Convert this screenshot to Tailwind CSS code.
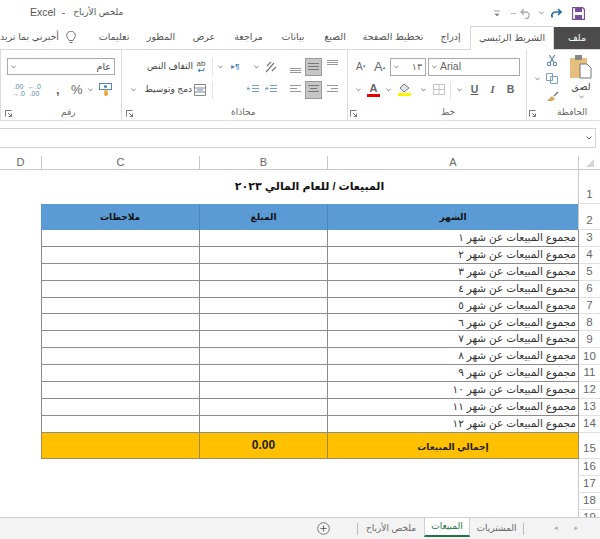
<!DOCTYPE html>
<html lang="ar">
<head>
  <meta charset="UTF-8" />
  <title>ملخص الأرباح - Excel</title>
  <script src="https://cdn.jsdelivr.net/npm/@tailwindcss/browser@4"></script>
</head>
<body class="bg-white text-[#444] overflow-hidden font-['Liberation_Sans','DejaVu_Sans',sans-serif]">
  <svg class="hidden">
    <symbol id="chev" viewBox="0 0 6 4"><path d="M.5.5 3 3 5.5.5" fill="none" stroke="#666" stroke-width="1"/></symbol>
    <symbol id="launch" viewBox="0 0 7 7"><path d="M.5 6.500V.5h6M3 3l3.500 3.500M6.500 3.500v3h-3" fill="none" stroke="#777" stroke-width="1"/></symbol>
  </svg>

  <div class="w-[600px] h-[539px] flex flex-col overflow-hidden">
    <!-- title bar -->
    <div class="h-[26px] flex items-center">
      <span class="ml-[30px] text-[10.5px] text-[#555]">Excel</span>
      <span class="ml-[6px] text-[10.5px] text-[#555]">-</span>
      <span dir="rtl" class="ml-[8px] text-[9px] text-[#555] whitespace-nowrap">ملخص الأرباح</span>
      <div class="ml-auto mr-[15px] flex items-center">
        <svg class="w-[6px] h-[7px]" viewBox="0 0 6 7"><path d="M0 1h6M1 4h4l-2 2z" stroke="#888" fill="#888" stroke-width=".8"/></svg>
        <span class="ml-[11px] w-[5px] h-px bg-[#bbb]"></span>
        <svg class="ml-[4px] w-[12px] h-[11px]" viewBox="0 0 12 11"><path d="M4 1 1 4l3 3M1 4h6a3.500 3.500 0 0 1 0 6.500H5" fill="none" stroke="#a9a9a9" stroke-width="1.300"/></svg>
        <svg class="ml-[7px] w-[5px] h-[4px]"><use href="#chev"/></svg>
        <svg class="ml-[6px] w-[12px] h-[11px]" viewBox="0 0 12 11"><path d="M8 1l3 3-3 3M11 4H5.500a3.500 3.500 0 0 0-3 5.500" fill="none" stroke="#2b6ca8" stroke-width="1.700"/></svg>
        <svg class="ml-[10px] w-[13px] h-[13px]" viewBox="0 0 13 13"><path d="M.5.5h10l2 2v10H.5z" fill="#fff" stroke="#7a4f9a" stroke-width="1.300"/><rect x="3" y="1" width="7" height="4" fill="#7a4f9a"/><rect x="3" y="8" width="7" height="4" fill="#7a4f9a"/></svg>
      </div>
    </div>

    <!-- ribbon tabs -->
    <div class="h-[24px] flex items-stretch border-b border-[#d8d8d8] text-[9.500px] text-[#555] whitespace-nowrap" dir="ltr">
      <span class="w-[58px] flex items-center justify-end" dir="rtl">أخبرني بما تريد</span>
      <span class="w-[26px] flex items-center justify-center">
        <svg class="w-[10px] h-[13px]" viewBox="0 0 10 13"><path d="M3 9.500C2.500 7.500.7 7 .7 4.500a4.300 4.300 0 0 1 8.600 0C9.300 7 7.500 7.500 7 9.500zM3.500 11.500h3" fill="none" stroke="#666" stroke-width=".9"/></svg>
      </span>
      <span class="ml-[15px] w-[30px] flex items-center justify-center">تعليمات</span>
      <span class="ml-[20px] w-[24px] flex items-center justify-center">المطور</span>
      <span class="ml-[21px] w-[20px] flex items-center justify-center">عرض</span>
      <span class="ml-[21px] w-[27px] flex items-center justify-center">مراجعة</span>
      <span class="ml-[21px] w-[20px] flex items-center justify-center">بيانات</span>
      <span class="ml-[22px] w-[20px] flex items-center justify-center">الصيغ</span>
      <span class="ml-[20px] w-[56px] flex items-center justify-center">تخطيط الصفحة</span>
      <span class="ml-[20px] w-[19px] flex items-center justify-center">إدراج</span>
      <span class="ml-[10px] w-[84px] h-[24px] -mb-px bg-white border border-b-0 border-[#d8d8d8] flex items-center justify-center">الشريط الرئيسي</span>
      <span class="w-[46px] h-[22px] mt-[1px] bg-[#4b4b4b] text-white flex items-center justify-center">ملف</span>
    </div>

    <!-- ribbon groups -->
    <div class="h-[71px] flex border-b border-[#dcdcdc] shrink-0">
      <!-- number -->
      <div class="w-[122px] border-l border-r border-[#dcdcdc] flex flex-col">
        <div class="h-[28px] pt-[6px] flex items-center">
          <div class="ml-[6px] w-[108px] h-[17px] border border-[#aaa] flex items-center justify-between px-[3px] text-[9.500px]">
            <svg class="w-[5px] h-[4px]"><use href="#chev"/></svg><span>عام</span>
          </div>
        </div>
        <div class="h-[25px] flex items-center text-[#666]">
          <span class="ml-[11px] w-[13px] text-[7px] leading-[7px] text-center text-[#5a86b0]">.00<br>→.0</span>
          <span class="ml-[3px] w-[13px] text-[7px] leading-[7px] text-center text-[#5a86b0]">←.0<br>.00</span>
          <span class="ml-[15px] w-[6px] text-[13px] font-bold leading-[8px]">,</span>
          <span class="ml-[9px] text-[13px]">%</span>
          <svg class="ml-[5px] w-[5px] h-[4px]"><use href="#chev"/></svg>
          <svg class="ml-[6px] w-[13px] h-[13px]" viewBox="0 0 13 13"><rect x=".5" y=".5" width="12" height="6" fill="#fff" stroke="#4e87bd"/><circle cx="6.500" cy="3.500" r="1.600" fill="#4e87bd"/><circle cx="7" cy="8.500" r="2" fill="#e8b64c"/><circle cx="7" cy="11" r="2" fill="#e8a23c"/></svg>
        </div>
        <div class="mt-[4px] h-[14px] flex items-center">
          <svg class="ml-[4px] w-[7px] h-[7px]"><use href="#launch"/></svg>
          <span class="ml-[49px] text-[9px] text-[#666]">رقم</span>
        </div>
      </div>

      <!-- alignment -->
      <div class="w-[226px] border-r border-[#dcdcdc] flex flex-col">
        <div class="h-[28px] pt-[6px] flex items-center">
          <span class="ml-[25px] text-[9px] whitespace-nowrap w-[45px] text-right">التفاف النص</span>
          <span class="ml-[3px] w-[12px] flex flex-col items-center text-[8px] leading-[8px] text-[#555]">ab
            <svg class="w-[8px] h-[5px]" viewBox="0 0 8 5"><path d="M7 0v2.500H1.500M3 1 1 2.500 3 4" fill="none" stroke="#4e87bd"/></svg>
          </span>
          <span class="ml-[5px] w-px h-[18px] bg-[#e4e4e4]"></span>
          <svg class="ml-[5px] w-[5px] h-[4px]"><use href="#chev"/></svg>
          <span class="ml-[8px] w-[10px] text-[8px] font-bold text-[#4e87bd]">▸¶</span>
          <svg class="ml-[13px] w-[5px] h-[4px]"><use href="#chev"/></svg>
          <svg class="ml-[6px] w-[12px] h-[12px]" viewBox="0 0 12 12"><path d="M1 11 9 2M2 5l4-4M7 10l4-4" fill="none" stroke="#777" stroke-width="1.200"/></svg>
          <svg class="ml-[13px] mt-[8px] w-[11px] h-[5px]" viewBox="0 0 11 5"><path d="M0 .5h11M0 2.500h11M0 4.500h11" stroke="#999"/></svg>
          <span class="ml-[4px] w-[17px] h-[18px] bg-[#c6c6c6] border border-[#999] flex items-center justify-center"><svg class="w-[11px] h-[7px]" viewBox="0 0 11 7"><path d="M0 .5h11M0 3.500h11M0 6.500h11" stroke="#777"/></svg></span>
          <svg class="ml-[5px] -mt-[8px] w-[11px] h-[5px]" viewBox="0 0 11 5"><path d="M0 .5h11M0 2.500h11M0 4.500h11" stroke="#999"/></svg>
        </div>
        <div class="h-[25px] flex items-center">
          <svg class="ml-[9px] w-[5px] h-[4px]"><use href="#chev"/></svg>
          <span class="ml-[8px] text-[9px] whitespace-nowrap w-[48px] text-right">دمج وتوسيط</span>
          <svg class="ml-[2px] w-[12px] h-[12px]" viewBox="0 0 12 12"><path d="M.5.500h11v11H.500zM.5 4h11M.5 8h11" fill="none" stroke="#888"/><path d="M3 6h6" stroke="#4e87bd"/></svg>
          <span class="ml-[6px] w-px h-[18px] bg-[#e4e4e4]"></span>
          <svg class="ml-[34px] w-[12px] h-[9px]" viewBox="0 0 12 9"><path d="M5 .5h7M5 3.500h7M5 6.500h7M0 3.500h3M2 1.500 0 3.500l2 2" fill="none" stroke="#7a9fc4"/></svg>
          <svg class="ml-[6px] w-[12px] h-[9px]" viewBox="0 0 12 9"><path d="M5 .5h7M5 3.500h7M5 6.500h7M0 3.500h3M1 1.500l2 2-2 2" fill="none" stroke="#7a9fc4"/></svg>
          <svg class="ml-[13px] w-[11px] h-[9px]" viewBox="0 0 11 9"><path d="M0 .5h11M0 3.500h7M0 6.500h11" stroke="#999"/></svg>
          <span class="ml-[4px] w-[17px] h-[18px] bg-[#c6c6c6] border border-[#999] flex items-center justify-center"><svg class="w-[11px] h-[9px]" viewBox="0 0 11 9"><path d="M0 .5h11M2 3.500h7M0 6.500h11" stroke="#777"/></svg></span>
          <svg class="ml-[5px] w-[11px] h-[9px]" viewBox="0 0 11 9"><path d="M0 .5h11M4 3.500h7M0 6.500h11" stroke="#999"/></svg>
        </div>
        <div class="mt-[4px] h-[14px] flex items-center">
          <svg class="ml-[4px] w-[7px] h-[7px]"><use href="#launch"/></svg>
          <span class="ml-[98px] text-[9px] text-[#666]">محاذاة</span>
        </div>
      </div>

      <!-- font -->
      <div class="w-[179px] border-r border-[#dcdcdc] flex flex-col">
        <div class="h-[28px] pt-[6px] flex items-center text-[#666]">
          <span class="ml-[8px] w-[10px] text-[10px]">A<sup class="text-[5px] text-[#4e87bd]">▾</sup></span>
          <span class="ml-[8px] w-[12px] text-[13px]">A<sup class="text-[5px] text-[#4e87bd]">▴</sup></span>
          <div class="ml-[4px] w-[36px] h-[18px] border border-[#aaa] flex items-center justify-between px-[3px] text-[9.500px]">
            <svg class="w-[5px] h-[4px]"><use href="#chev"/></svg><span>١٣</span>
          </div>
          <div class="ml-[2px] w-[92px] h-[18px] border border-[#aaa] flex items-center px-[3px] text-[10.500px] gap-[3px]">
            <svg class="w-[5px] h-[4px]"><use href="#chev"/></svg><span>Arial</span>
          </div>
        </div>
        <div class="h-[25px] flex items-center text-[#666]">
          <svg class="ml-[8px] w-[5px] h-[4px]"><use href="#chev"/></svg>
          <span class="ml-[6px] w-[13px] flex flex-col items-center text-[11px] leading-[10px] font-bold">A<span class="w-[13px] h-[3px] mt-[1px] bg-[#e60000]"></span></span>
          <svg class="ml-[6px] w-[5px] h-[4px]"><use href="#chev"/></svg>
          <span class="ml-[7px] w-[13px] flex flex-col items-center">
            <svg class="w-[12px] h-[10px]" viewBox="0 0 12 10"><path d="M5 1 1 5l4 4 5-4z" fill="#dfe6ee" stroke="#777"/></svg>
            <span class="w-[13px] h-[3px] bg-[#fff200]"></span>
          </span>
          <svg class="ml-[10px] w-[5px] h-[4px]"><use href="#chev"/></svg>
          <svg class="ml-[7px] w-[12px] h-[11px]" viewBox="0 0 12 11"><path d="M.5.500h11v10H.500zM6 .5v10M.5 5.500h11" fill="none" stroke="#c4c4c4"/></svg>
          <span class="ml-[5px] w-px h-[18px] bg-[#e4e4e4]"></span>
          <svg class="ml-[6px] w-[5px] h-[4px]"><use href="#chev"/></svg>
          <span class="ml-[7px] w-[11px] text-center text-[10.500px] font-bold underline">U</span>
          <span class="ml-[7px] w-[11px] text-center text-[10.500px] font-bold italic font-['Liberation_Serif',serif]">I</span>
          <span class="ml-[7px] w-[11px] text-center text-[10.500px] font-bold">B</span>
        </div>
        <div class="mt-[4px] h-[14px] flex items-center">
          <svg class="ml-[2px] w-[7px] h-[7px]"><use href="#launch"/></svg>
          <span class="ml-[84px] text-[9px] text-[#666]">خط</span>
        </div>
      </div>

      <!-- clipboard -->
      <div class="w-[73px] flex flex-col">
        <div class="h-[56px] flex">
          <svg class="ml-[8px] mt-[27px] w-[5px] h-[4px]"><use href="#chev"/></svg>
          <div class="ml-[4px] w-[16px] pt-[5px] flex flex-col items-center gap-[7px]">
            <svg class="w-[12px] h-[11px]" viewBox="0 0 12 12"><path d="M3 0l5 8M9 0 4 8" stroke="#5a7ea6" stroke-width="1.200"/><circle cx="2.800" cy="9.800" r="1.800" fill="none" stroke="#5a7ea6" stroke-width="1.100"/><circle cx="9.200" cy="9.800" r="1.800" fill="none" stroke="#5a7ea6" stroke-width="1.100"/></svg>
            <svg class="w-[12px] h-[11px]" viewBox="0 0 12 11"><path d="M.5.500h6v7h-6zM4.500 3.500h7v7h-7z" fill="#fff" stroke="#7a9fc4"/></svg>
            <svg class="w-[13px] h-[11px]" viewBox="0 0 13 11"><path d="M1 10 6 5l3 3-3 2z" fill="#d6a55a"/><path d="M8 5l4-4" stroke="#777" stroke-width="1.500"/></svg>
          </div>
          <div class="ml-[8px] w-[26px] pt-[5px] flex flex-col items-center">
            <svg class="w-[22px] h-[24px]" viewBox="0 0 22 24"><rect y="3" width="17" height="20" fill="#e6bf7e"/><rect x="5" y="0" width="7" height="5" fill="#888"/><path d="M10 9h7l4 4v10H10z" fill="#fff" stroke="#777"/></svg>
            <span class="text-[9.500px] mt-[2px] leading-[11px]">لصق</span>
            <svg class="mt-[3px] w-[5px] h-[4px]"><use href="#chev"/></svg>
          </div>
        </div>
        <div class="h-[14px] flex items-center">
          <svg class="ml-[2px] w-[7px] h-[7px]"><use href="#launch"/></svg>
          <span class="ml-[21px] text-[9px] text-[#666] whitespace-nowrap">الحافظة</span>
        </div>
      </div>
    </div>

    <!-- formula bar -->
    <div class="h-[7px] shrink-0"></div>
    <div class="h-[20px] shrink-0 border-y border-r border-[#d4d4d4] mr-[4px] flex items-center justify-end pr-[3px]">
      <svg class="w-[6px] h-[4px]"><use href="#chev"/></svg>
    </div>
    <div class="h-[8px] shrink-0"></div>

    <!-- sheet -->
    <div id="sheet" class="h-[361px] shrink-0 overflow-hidden grid grid-cols-[41px_159px_128px_251px_21px] content-start text-[#222]">
      <div class="h-[14px] border-b border-[#c8c8c8] text-[11px] text-[#666] flex items-center justify-center">D</div>
      <div class="h-[14px] border-b border-l border-r border-[#c8c8c8] text-[11px] text-[#666] flex items-center justify-center">C</div>
      <div class="h-[14px] border-b border-r border-[#c8c8c8] text-[11px] text-[#666] flex items-center justify-center">B</div>
      <div class="h-[14px] border-b border-r border-[#c8c8c8] text-[11px] text-[#666] flex items-center justify-center">A</div>
      <div class="h-[14px] border-b border-[#c8c8c8] flex items-center justify-center">
        <svg class="w-[8px] h-[8px]" viewBox="0 0 8 8"><path d="M8 0v8H0z" fill="#d6d6d6"/></svg>
      </div>

      <!-- row 1 -->
      <div class="col-span-4 h-[34px] border-r border-[#c8c8c8] pl-[41px] flex items-center justify-center">
        <span dir="rtl" class="text-[11px] font-bold text-[#111] -mt-[2px]">المبيعات / للعام المالي ٢٠٢٣</span>
      </div>
      <div class="h-[34px] border-b border-[#e0e0e0] text-[11.500px] text-[#666] flex items-end justify-center">1</div>

      <!-- row 2 -->
      <div></div>
      <div class="h-[26px] bg-[#5b9bd5] border-r border-[#4f86b8] flex items-center justify-center text-[9px] font-bold text-[#111] pt-[2px]">ملاحظات</div>
      <div class="h-[26px] bg-[#5b9bd5] border-r border-[#4f86b8] flex items-center justify-center text-[9px] font-bold text-[#111] pt-[2px]">المبلغ</div>
      <div class="h-[26px] bg-[#5b9bd5] flex items-center justify-center text-[9px] font-bold text-[#111] border-r border-[#c8c8c8] pt-[2px]">الشهر</div>
      <div class="h-[26px] border-b border-[#e0e0e0] text-[11.500px] text-[#666] flex items-end justify-center">2</div>
    </div>

    <!-- sheet tabs -->
    <div class="h-[22px] shrink-0 bg-[#f3f3f3] border-t border-[#d0d0d0] flex items-stretch text-[9px] text-[#666] whitespace-nowrap">
      <span class="ml-[317px] w-[14px] flex items-center">
        <svg class="w-[13px] h-[13px]" viewBox="0 0 13 13"><circle cx="6.500" cy="6.500" r="5.800" fill="none" stroke="#777"/><path d="M6.500 3.500v6M3.500 6.500h6" stroke="#666"/></svg>
      </span>
      <span class="ml-[26px] w-px h-[12px] my-auto bg-[#bbb]"></span>
      <span class="w-[66px] flex items-center justify-center">ملخص الأرباح</span>
      <span class="w-[46px] mb-[2px] bg-white border-x border-[#d0d0d0] border-b-2 border-b-[#217346] text-[#217346] flex items-center justify-center">المبيعات</span>
      <span class="w-[53px] flex items-center justify-center">المشتريات</span>
      <span class="w-px h-[12px] my-auto bg-[#bbb]"></span>
      <span class="ml-[30px] text-[#aaa] text-[7px] flex items-center">◂</span>
      <span class="ml-[17px] text-[#aaa] text-[7px] flex items-center">▸</span>
    </div>
  </div>

  <script>
    const sheet = document.getElementById('sheet');
    const months = ['١','٢','٣','٤','٥','٦','٧','٨','٩','١٠','١١','١٢'];
    let html = '';
    months.forEach((m, i) => {
      html += `
        <div></div>
        <div class="h-[16.9px] border-l border-r border-b border-[#8c8c8c]"></div>
        <div class="h-[16.9px] border-r border-b border-[#8c8c8c]"></div>
        <div dir="rtl" class="h-[16.9px] border-r border-b border-[#8c8c8c] pr-[2px] flex items-center text-[10.5px] text-[#333]">مجموع المبيعات عن شهر ${m}</div>
        <div class="h-[16.9px] border-b border-[#e0e0e0] text-[11.500px] text-[#666] flex items-center justify-center">${i + 3}</div>`;
    });
    html += `
      <div></div>
      <div class="h-[26px] bg-[#ffc000] border border-t-0 border-[#a08c50]"></div>
      <div class="h-[26px] bg-[#ffc000] border-r border-b border-[#a08c50] flex items-center justify-center text-[12px] font-bold text-[#222]">0.00</div>
      <div class="h-[26px] bg-[#ffc000] border-r border-b border-[#a08c50] flex items-center justify-center text-[9px] font-bold text-[#222] pt-[5px]">إجمالي المبيعات</div>
      <div class="h-[26px] border-b border-[#e0e0e0] text-[11.500px] text-[#666] flex items-end justify-center">15</div>`;
    [16, 17, 18, 19].forEach((n) => {
      html += `
        <div class="col-span-4 h-[17px] border-r border-[#c8c8c8]"></div>
        <div class="h-[17px] border-b border-[#e0e0e0] text-[11.500px] text-[#666] flex items-center justify-center">${n}</div>`;
    });
    sheet.insertAdjacentHTML('beforeend', html);
  </script>
</body>
</html>
